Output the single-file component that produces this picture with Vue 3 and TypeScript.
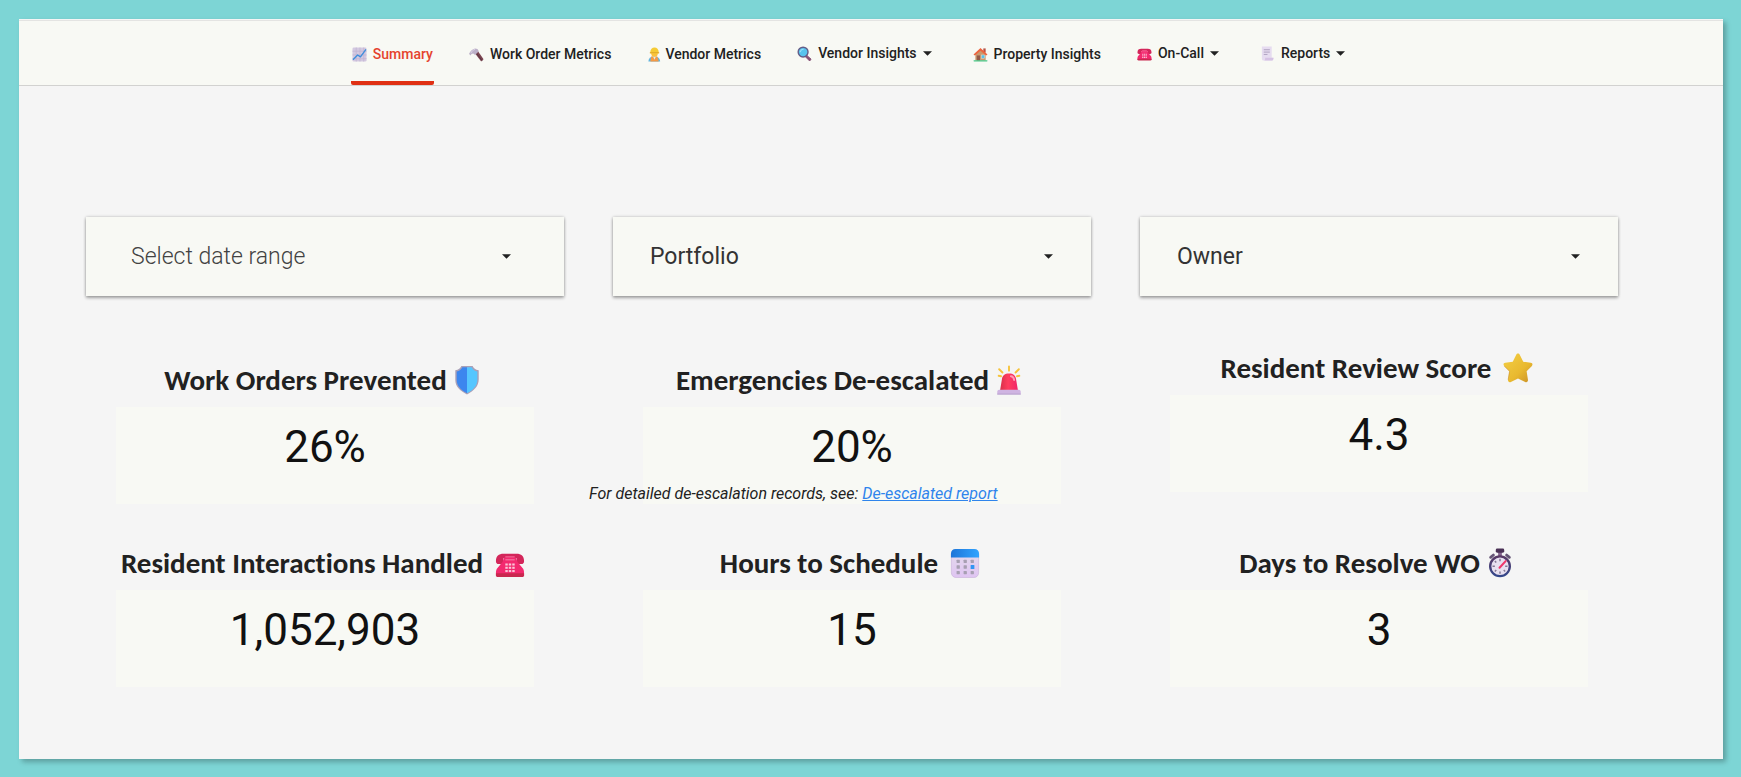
<script setup lang="ts">
interface NavItem {
  label: string
  icon: string
  active?: boolean
  menu?: boolean
  tight?: boolean
}

interface Metric {
  title: string
  icon: string
  value: string
  tight?: boolean
  raised?: boolean
  report?: boolean
}

const navItems: NavItem[] = [
  { label: 'Summary', icon: 'chart', active: true },
  { label: 'Work Order Metrics', icon: 'hammer' },
  { label: 'Vendor Metrics', icon: 'worker', tight: true },
  { label: 'Vendor Insights', icon: 'magnifier', menu: true },
  { label: 'Property Insights', icon: 'house' },
  { label: 'On-Call', icon: 'phone', menu: true },
  { label: 'Reports', icon: 'page', menu: true },
]

const filters: string[] = ['Portfolio', 'Owner']

const metrics: Metric[] = [
  { title: 'Work Orders Prevented', icon: 'shield', value: '26%', tight: true },
  { title: 'Emergencies De-escalated', icon: 'siren', value: '20%', tight: true, report: true },
  { title: 'Resident Review Score', icon: 'star', value: '4.3', raised: true },
  { title: 'Resident Interactions Handled', icon: 'phone', value: '1,052,903' },
  { title: 'Hours to Schedule', icon: 'calendar', value: '15' },
  { title: 'Days to Resolve WO', icon: 'stopwatch', value: '3', tight: true },
]
</script>

<template>
  <div class="page">
    <svg class="sprite" width="0" height="0" aria-hidden="true">
      <defs>
        <linearGradient id="g-star" x1="0" y1="0" x2="1" y2="1">
          <stop offset="0" stop-color="#f3cf45" />
          <stop offset="0.6" stop-color="#e9b92f" />
          <stop offset="1" stop-color="#c98f28" />
        </linearGradient>
        <linearGradient id="g-siren" x1="0" y1="0" x2="1" y2="0">
          <stop offset="0" stop-color="#d9304a" />
          <stop offset="0.45" stop-color="#ff3d5e" />
          <stop offset="1" stop-color="#f0246a" />
        </linearGradient>
        <linearGradient id="g-cal" x1="0" y1="0" x2="1" y2="0">
          <stop offset="0" stop-color="#1c74d8" />
          <stop offset="1" stop-color="#32a4ff" />
        </linearGradient>
        <linearGradient id="g-calbody" x1="0" y1="0" x2="0" y2="1">
          <stop offset="0" stop-color="#e4dcec" />
          <stop offset="1" stop-color="#dfc4f2" />
        </linearGradient>
        <linearGradient id="g-watch" x1="0" y1="0" x2="0" y2="1">
          <stop offset="0" stop-color="#5a3a66" />
          <stop offset="1" stop-color="#34478a" />
        </linearGradient>
      </defs>

      <symbol id="i-chart" viewBox="0 0 32 32">
        <rect x="1" y="1" width="30" height="30" rx="3" fill="#d3c9e0" />
        <path d="M1 9h30M1 17h30M1 25h30M9 1v30M17 1v30M25 1v30" stroke="#c0b2d2" stroke-width="1.5" />
        <path d="M3 26l9-9 6 4L29 6" fill="none" stroke="#3f8fdc" stroke-width="3" stroke-linecap="round" stroke-linejoin="round" />
      </symbol>

      <symbol id="i-hammer" viewBox="0 0 32 32">
        <path d="M11 11l6-5 14 20-5 5z" fill="#7a4450" />
        <path d="M14 11l14 18" stroke="#5a3340" stroke-width="2" />
        <path d="M0 15C2 9 7 4 13 3l5 1 3 5-8 8-4-3-4 1-1 3z" fill="#bcb0c8" />
        <path d="M4 13c2-4 5-7 9-8" fill="none" stroke="#ddd4e6" stroke-width="2" />
      </symbol>

      <symbol id="i-worker" viewBox="0 0 32 32">
        <path d="M3 31c0-7 4-11 12-11s13 4 13 11z" fill="#62b5dd" />
        <path d="M9 20h13l3 11H7z" fill="#f49a45" />
        <path d="M13 20l3 7 3-7z" fill="#d7edf2" />
        <circle cx="16" cy="14" r="7" fill="#fbc23c" />
        <path d="M7 11c0-6 4-10 9-10s9 4 9 10l1 3H6z" fill="#f5cb34" />
        <path d="M6 12h20" stroke="#d69a27" stroke-width="1.5" />
      </symbol>

      <symbol id="i-magnifier" viewBox="0 0 32 32">
        <path d="M21 20l9 8-3 4-9-9z" fill="#865074" stroke="#865074" stroke-width="2" stroke-linejoin="round" />
        <circle cx="13" cy="13" r="10.5" fill="#58c4ee" stroke="#645d88" stroke-width="3" />
        <path d="M7 12c1-3 3-5 6-5" fill="none" stroke="#9ce2fa" stroke-width="2.5" stroke-linecap="round" />
      </symbol>

      <symbol id="i-house" viewBox="0 0 32 32">
        <path d="M22 3h5v9h-5z" fill="#b65345" />
        <path d="M5 15L16 5l11 10v14H5z" fill="#ca9a70" />
        <path d="M1 16L16 2l15 14-3 2L16 8 4 18z" fill="#ed643f" />
        <rect x="8" y="18" width="7" height="11" fill="#925a49" />
        <rect x="18" y="17" width="7" height="7" fill="#55c2ed" stroke="#eee1ce" stroke-width="1" />
        <rect x="1" y="28" width="30" height="3" rx="1.5" fill="#46c886" />
      </symbol>

      <symbol id="i-phone" viewBox="0 0 32 32">
        <path d="M1 14C1 8 4 6 9 6h14c5 0 8 2 8 8 0 2-1 3-3 3h-5v-6H9v6H4c-2 0-3-1-3-3z" fill="#d3265a" />
        <path d="M10 10h12l2 5 6 7c1 2 1 3 1 6v2H1v-2c0-3 0-4 1-6l6-7z" fill="#f3296f" />
        <path d="M1 27h30v2c0 1-1 2-2 2H3c-1 0-2-1-2-2z" fill="#c9284f" />
        <path d="M11 9.500h10M11 12.500h10" stroke="#f76495" stroke-width="1.5" />
        <g fill="#fbc6d8">
          <rect x="11" y="16.500" width="2.6" height="2.200" /><rect x="14.7" y="16.500" width="2.6" height="2.200" /><rect x="18.4" y="16.500" width="2.6" height="2.200" />
          <rect x="11" y="20" width="2.6" height="2.200" /><rect x="14.7" y="20" width="2.6" height="2.200" /><rect x="18.4" y="20" width="2.6" height="2.200" />
          <rect x="11" y="23.500" width="2.6" height="2.200" /><rect x="14.7" y="23.500" width="2.6" height="2.200" /><rect x="18.4" y="23.500" width="2.6" height="2.200" />
        </g>
      </symbol>

      <symbol id="i-page" viewBox="0 0 32 32">
        <path d="M4 1h21v24h3c0 4-1 6-4 6H8c-3 0-4-2-4-5z" fill="#e6dcf0" />
        <path d="M11 25h18c0 4-1 6-4 6H9c2-1 2-3 2-6z" fill="#d5c2e4" />
        <path d="M8 8h13M8 13h13M8 18h8" stroke="#ac9fbd" stroke-width="2" />
      </symbol>

      <symbol id="i-shield" viewBox="0 0 32 32">
        <path d="M10 1h12c1 2 3 4 6.500 4.500v10c0 7-5 12-12.500 16C8.500 27.500 3.500 23 3.500 16V5.500C7 5 9 3 10 1z" fill="#a9a0b8" />
        <path d="M11 2.500h5V30C9.500 27 5 22 5 16V7c3-.5 5-2 6-4.500z" fill="#3c86ee" />
        <path d="M21 2.500h-5V30C22.500 27 27 22 27 16V7c-3-.5-5-2-6-4.500z" fill="#55c6ff" />
      </symbol>

      <symbol id="i-siren" viewBox="0 0 32 32">
        <path d="M16 1.500v4.500M5.500 4.500l3.500 3.500M26.500 4.500L23 8M5 11.500l2.500.5M27 11.500l-2.500.5" stroke="#f6c33b" stroke-width="2" stroke-linecap="round" />
        <path d="M6.500 27l2-12c.5-4 3-6 7.500-6s7 2 7.500 6l2 12z" fill="url(#g-siren)" />
        <path d="M18 12c2 0 3 1 3.500 4" fill="none" stroke="#ff9db0" stroke-width="2" stroke-linecap="round" />
        <path d="M5.500 26.500h21c1 0 2 1 2 2v3h-25v-3c0-1 1-2 2-2z" fill="#cfb4e2" />
        <path d="M3.500 31h25" stroke="#b9a3cc" stroke-width="1" />
      </symbol>

      <symbol id="i-star" viewBox="0 0 32 32">
        <path d="M14 2c1-2 3-2 4 0l3.600 7.300 8 1.200c2 .3 2.400 2.200 1 3.600l-5.400 5.400 1.400 9.100c.3 2-1.200 3-3 2.200L16 27.200l-7.600 3.600c-1.800.8-3.300-.2-3-2.200L6.800 19.500 1.400 14.100C0 12.700.4 10.800 2.400 10.500l8-1.200z" fill="url(#g-star)" />
        <path d="M5.500 28.500L7 19.500l-5.500-5.500" fill="none" stroke="#c78d2b" stroke-width="1" opacity="0.6" />
      </symbol>

      <symbol id="i-calendar" viewBox="0 0 32 32">
        <rect x="1.500" y="2" width="29" height="29.500" rx="5" fill="url(#g-calbody)" stroke="#cdb8de" stroke-width="0.800" />
        <path d="M1 10V6c0-3 2-5 5-5h20c3 0 5 2 5 5v4z" fill="url(#g-cal)" />
        <g fill="#a79fb2">
          <rect x="7" y="12.500" width="3.500" height="3.500" rx="0.500" /><rect x="14.500" y="12.500" width="3.500" height="3.500" rx="0.500" /><rect x="22" y="12.500" width="3.500" height="3.500" rx="0.500" />
          <rect x="7" y="18.500" width="3.500" height="3.500" rx="0.500" /><rect x="14.500" y="18.500" width="3.500" height="3.500" rx="0.500" />
          <rect x="7" y="24.500" width="3.500" height="3.500" rx="0.500" /><rect x="14.500" y="24.500" width="3.500" height="3.500" rx="0.500" /><rect x="22" y="24.500" width="3.500" height="3.500" rx="0.500" />
        </g>
        <rect x="22" y="18" width="4" height="4.500" rx="0.500" fill="#3095f2" />
      </symbol>

      <symbol id="i-stopwatch" viewBox="0 0 32 32">
        <rect x="14" y="3" width="4" height="6" fill="#84668f" />
        <rect x="11.500" y="0.500" width="9" height="4.500" rx="1.500" fill="#4a3055" />
        <path d="M6 10l3-2.500M26 10l-3-2.500" stroke="#655575" stroke-width="3" stroke-linecap="round" />
        <circle cx="16" cy="19.500" r="10.500" fill="#e8e0f0" stroke="url(#g-watch)" stroke-width="2.500" />
        <path d="M16 11.500V14M16 25v2.500M8 19.500h2.500M21.500 19.500H24M10.500 14l1.500 1.500M21.500 25L20 23.500M10.500 25l1.500-1.500" stroke="#857894" stroke-width="1.600" />
        <path d="M15.500 21l6.500-7" stroke="#f0386b" stroke-width="2.200" stroke-linecap="round" />
      </symbol>

      <symbol id="i-caret" viewBox="0 0 10 5">
        <path d="M0 0h10L5 5z" fill="currentColor" />
      </symbol>
    </svg>

    <div class="panel">
      <nav class="nav">
        <template v-for="item in navItems" :key="item.label">
          <button v-if="item.menu" type="button" class="tab tab-menu">
            <svg class="tab-icon" aria-hidden="true"><use :href="`#i-${item.icon}`" /></svg>
            <span>{{ item.label }}</span>
            <svg class="caret" aria-hidden="true"><use href="#i-caret" /></svg>
          </button>
          <a v-else href="#" class="tab" :class="{ active: item.active, tight: item.tight }">
            <svg class="tab-icon" aria-hidden="true"><use :href="`#i-${item.icon}`" /></svg>
            <span>{{ item.label }}</span>
          </a>
        </template>
      </nav>

      <main class="content">
        <div class="filters">
          <button type="button" class="filter filter-date">
            <span>Select date range</span>
            <svg class="caret" aria-hidden="true"><use href="#i-caret" /></svg>
          </button>
          <div v-for="name in filters" :key="name" class="filter">
            <select class="filter-select" :aria-label="name">
              <option>{{ name }}</option>
            </select>
            <svg class="caret" aria-hidden="true"><use href="#i-caret" /></svg>
          </div>
        </div>

        <div class="metrics">
          <section v-for="m in metrics" :key="m.title" class="metric" :class="{ raised: m.raised }">
            <h2 class="metric-title" :class="{ tight: m.tight }">
              <span>{{ m.title }}</span>
              <svg class="metric-icon" aria-hidden="true"><use :href="`#i-${m.icon}`" /></svg>
            </h2>
            <div class="metric-box">
              <span class="metric-value">{{ m.value }}</span>
              <p v-if="m.report" class="note">For detailed de-escalation records, see: <a href="#">De-escalated report</a></p>
            </div>
          </section>
        </div>
      </main>
    </div>
  </div>
</template>

<style>
body {
  margin: 0;
}
</style>

<style scoped>
.page {
  box-sizing: border-box;
  min-height: 100vh;
  display: flex;
  padding: 19px 18px 18px 19px;
  background: #7dd5d5;
  font-family: Roboto, "Liberation Sans", sans-serif;
  color: #212121;
}

.sprite {
  position: absolute;
}

.panel {
  flex: 1;
  min-width: 0;
  background: #f5f5f5;
  box-shadow: 3px 3px 5px rgba(0, 0, 0, 0.26);
}

.nav {
  display: flex;
  justify-content: center;
  gap: 34px;
  height: 64px;
  margin-top: 1px;
  padding-right: 40px;
  background: #f8f9f4;
  border-top: 1px solid #e4e4e2;
  border-bottom: 1px solid #d2d2d0;
}

.tab {
  display: flex;
  align-items: center;
  gap: 6px;
  padding: 6px 1px 0;
  border: 0;
  border-bottom: 4px solid transparent;
  background: none;
  font: 500 14px/20px Roboto, "Liberation Sans", sans-serif;
  color: #212121;
  text-decoration: none;
  white-space: nowrap;
}

.tab.tight {
  gap: 3px;
}

.tab.active {
  color: #e5432d;
  background: linear-gradient(#e03014, #e03014) bottom / 100% 4px no-repeat border-box;
  border-radius: 2px;
}

.tab-menu {
  padding: 4px 6px 0 1px;
}

.tab-icon {
  width: 15px;
  height: 15px;
}

.caret {
  width: 9px;
  height: 5px;
  color: #212121;
}

.content {
  padding: 131px 105px 72px 67px;
}

.filters,
.metrics {
  display: grid;
  grid-template-columns: repeat(3, minmax(0, 1fr));
  column-gap: 49px;
}

.filter {
  position: relative;
  height: 79px;
  background: #f8f9f4;
  border: 0;
  box-shadow: 0 2px 3px rgba(0, 0, 0, 0.3), 0 0 3px rgba(0, 0, 0, 0.22);
}

.filter-date {
  display: flex;
  align-items: center;
  justify-content: space-between;
  padding: 0 53px 0 45px;
  font: 300 23px/28px Roboto, "Liberation Sans", sans-serif;
  color: #424242;
}

.filter-select {
  appearance: none;
  width: 100%;
  height: 100%;
  padding: 0 60px 0 37px;
  border: 0;
  background: none;
  font: 400 23px/28px Roboto, "Liberation Sans", sans-serif;
  color: #333;
}

.filter-select + .caret {
  position: absolute;
  right: 38px;
  top: 37px;
  pointer-events: none;
}

.metrics {
  margin-top: 51px;
  row-gap: 38px;
  align-items: end;
}

.metric {
  padding: 0 30px;
}

.metric.raised {
  margin-bottom: 12px;
}

.metric-title {
  display: flex;
  align-items: center;
  justify-content: center;
  gap: 12px;
  height: 48px;
  margin: 0;
  padding: 0 4px 6px 0;
  box-sizing: border-box;
  font: 700 29px/40px Carlito, Calibri, Lato, sans-serif;
  font-variant-ligatures: none;
  color: #212121;
  white-space: nowrap;
}

.metric-title.tight {
  gap: 5px;
}

.metric-icon {
  flex: none;
  width: 30px;
  height: 30px;
}

.metric-box {
  position: relative;
  height: 97px;
  padding-top: 14px;
  box-sizing: border-box;
  background: #f8f9f4;
  text-align: center;
}

.metric-value {
  font-size: 44px;
  line-height: 53px;
  color: #111;
}

.note {
  position: absolute;
  left: -54px;
  bottom: 0;
  margin: 0;
  font-size: 16px;
  line-height: 20px;
  font-style: italic;
  white-space: nowrap;
}

.note a {
  color: #2f84ec;
}
</style>
